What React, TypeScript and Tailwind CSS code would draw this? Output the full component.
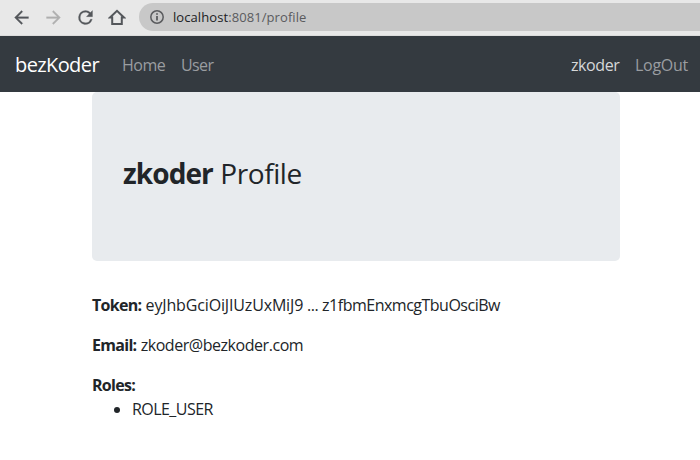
import React from "react";

function BrowserBar() {
  return (
    <header className="flex h-9 shrink-0 items-start border-b border-[#dcdcdc] bg-[#e8e8e8] pl-[10.5px] pt-[3px] text-[#54575b]">
      <svg className="mt-[3.5px] size-[21px] shrink-0" viewBox="0 0 24 24" fill="currentColor">
        <path d="M20 11H7.83l5.59-5.59L12 4l-8 8 8 8 1.41-1.41L7.83 13H20v-2z" stroke="currentColor" strokeWidth="0.3" />
      </svg>
      <svg className="ml-[11px] mt-[3.5px] size-[21px] shrink-0 text-[#b0b0b0]" viewBox="0 0 24 24" fill="currentColor">
        <path d="M12 4l-1.41 1.41L16.17 11H4v2h12.17l-5.58 5.59L12 20l8-8z" stroke="currentColor" strokeWidth="0.3" />
      </svg>
      <svg className="ml-[11px] mt-[3.5px] size-[21px] shrink-0" viewBox="0 0 24 24" fill="currentColor">
        <path d="M17.65 6.35A7.96 7.96 0 0 0 12 4a8 8 0 1 0 7.73 10h-2.08A6 6 0 1 1 12 6c1.66 0 3.14.69 4.22 1.78L13 11h7V4z" stroke="currentColor" strokeWidth="0.3" />
      </svg>
      <svg className="ml-[12px] mt-[6px] h-[17px] w-[18px] shrink-0" viewBox="0 0 18 17" fill="none" stroke="currentColor" strokeWidth="2">
        <path d="M2 8.5 9 1.8l7 6.7h-2.2V15H4.2V8.5z" />
      </svg>
      <div className="ml-[13.5px] flex h-7 flex-1 items-center rounded-l-full bg-[#c8c8c8] pl-[11px] font-['Open_Sans','Noto_Sans',sans-serif] text-[13px] text-[#5a5b5e]">
        <svg className="size-[14px] shrink-0" viewBox="0 0 14 14" fill="none" stroke="currentColor" strokeWidth="1.5">
          <circle cx="7" cy="7" r="6.2" />
          <path d="M7 6v4.5M7 3.3v1.5" strokeWidth="1.8" />
        </svg>
        <span className="ml-[9px] whitespace-nowrap leading-7 tracking-[0.08px]">
          <span className="text-[#202124]">localhost</span>:8081/profile
        </span>
      </div>
    </header>
  );
}

function NavBar() {
  return (
    <nav className="flex h-14 shrink-0 items-center bg-[#343a40] pl-[15px] pr-3 pt-px text-[#9a9da0]">
      <a className="w-[84px] whitespace-nowrap text-xl leading-[30px] tracking-[-0.6px] text-white">bezKoder</a>
      <a className="ml-[23px] w-[43px] tracking-[-0.5px]">Home</a>
      <a className="ml-4 tracking-[-0.6px]">User</a>
      <a className="ml-auto w-[48px] tracking-[-0.4px] text-[#d6d8d9]">zkoder</a>
      <a className="ml-4 w-[53px] tracking-[-0.3px]">LogOut</a>
    </nav>
  );
}

export default function App() {
  return (
    <div className="flex h-[460px] w-[700px] flex-col overflow-hidden bg-white font-['Open_Sans','Noto_Sans',sans-serif] text-base leading-6 text-[#212529]">
      <BrowserBar />
      <NavBar />
      <main className="ml-[92px] w-[528px]">
        <section className="mb-8 h-[169px] rounded-[5px] bg-[#e8ebee] pl-[31px] pr-8 pt-16">
          <h3 className="text-[28px] font-medium leading-[35px]">
            <strong className="font-bold tracking-[-0.9px]">zkoder</strong> <span className="font-normal tracking-[-0.4px]">Profile</span>
          </h3>
        </section>
        <p className="mb-4 whitespace-nowrap">
          <strong className="tracking-[-0.7px]">Token:</strong>{" "}
          <span className="tracking-[-0.15px]">eyJhbGciOiJIUzUxMiJ9</span>
          <span className="tracking-[-0.4px]"> ... </span>
          <span className="tracking-[-0.5px]">z1fbmEnxmcgTbuOsciBw</span>
        </p>
        <p className="mb-4">
          <strong className="tracking-[-0.7px]">Email:</strong>{" "}
          <span className="tracking-[-0.45px]">zkoder@bezkoder.com</span>
        </p>
        <strong className="block tracking-[-0.7px]">Roles:</strong>
        <ul className="list-disc pl-10">
          <li className="tracking-[-0.55px]">ROLE_USER</li>
        </ul>
      </main>
    </div>
  );
}
